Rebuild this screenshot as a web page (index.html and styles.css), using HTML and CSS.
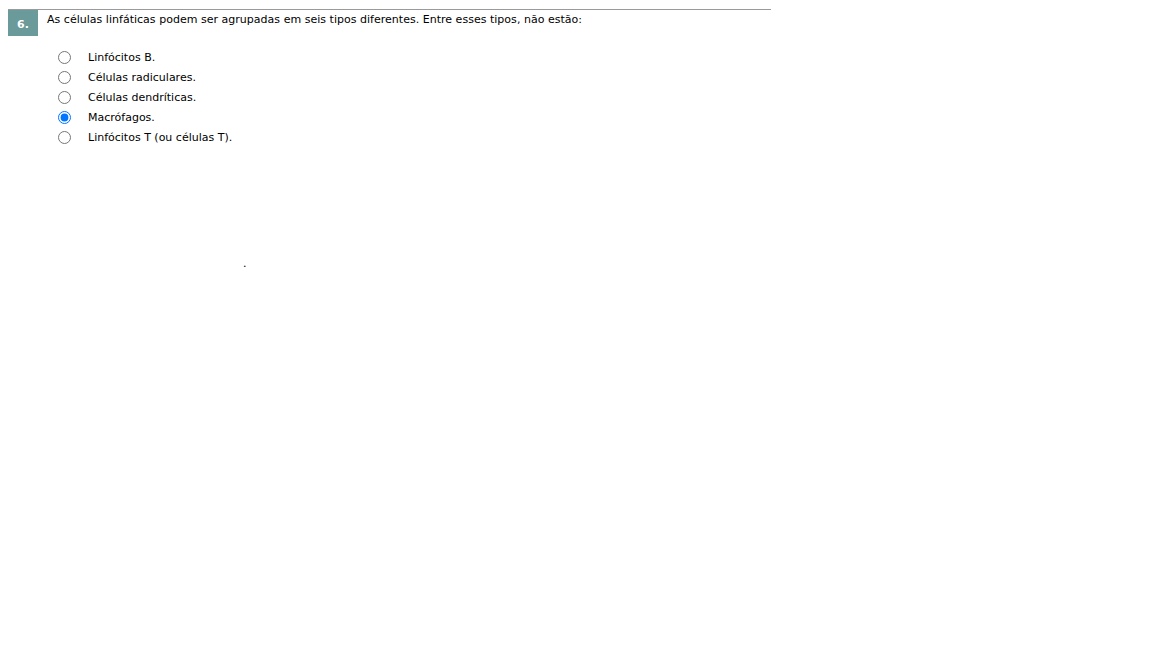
FILE: index.html
```html
<!DOCTYPE html>
<html lang="pt">
<head>
<meta charset="utf-8">
<title>Questão 6</title>
<link rel="stylesheet" href="styles.css">
</head>
<body>
<div class="question">
  <div class="q-head">
    <div class="q-num">6.</div>
    <div class="q-text">As células linfáticas podem ser agrupadas em seis tipos diferentes. Entre esses tipos, não estão:</div>
  </div>
  <ul class="options">
    <li class="option"><input type="radio" name="q6" id="a"><label for="a">Linfócitos B.</label></li>
    <li class="option"><input type="radio" name="q6" id="b"><label for="b">Células radiculares.</label></li>
    <li class="option"><input type="radio" name="q6" id="c"><label for="c">Células dendríticas.</label></li>
    <li class="option"><input type="radio" name="q6" id="d" checked><label for="d">Macrófagos.</label></li>
    <li class="option"><input type="radio" name="q6" id="e"><label for="e">Linfócitos T (ou células T).</label></li>
  </ul>
  <div class="dot">.</div>
</div>
</body>
</html>
```
FILE: styles.css
```css
html, body {
  margin: 0;
  padding: 0;
  background: #fff;
}
body {
  padding: 9px 8px 0 8px;
  font-family: "DejaVu Sans", Verdana, sans-serif;
  font-size: 11px;
  color: #000;
}
.question {
  width: 763px;
}
.q-head {
  display: flex;
  border-top: 1px solid #9a9a9a;
}
.q-num {
  width: 30px;
  height: 26px;
  background: #6a9a9a;
  color: #fff;
  font-weight: bold;
  font-size: 11px;
  display: flex;
  align-items: center;
  justify-content: center;
  padding-top: 3px;
  box-sizing: border-box;
}
.q-text {
  padding: 3px 0 0 9px;
  line-height: 14px;
  letter-spacing: 0.02px;
}
.options {
  list-style: none;
  margin: 0;
  padding: 11px 0 0 0;
}
.option {
  display: flex;
  align-items: center;
  height: 20px;
}
.option input {
  margin: 0 0 0 50px;
  width: 13px;
  height: 13px;
}
.option label {
  margin-left: 17px;
}
.dot {
  padding: 111px 0 0 235px;
  line-height: 12px;
}
```
